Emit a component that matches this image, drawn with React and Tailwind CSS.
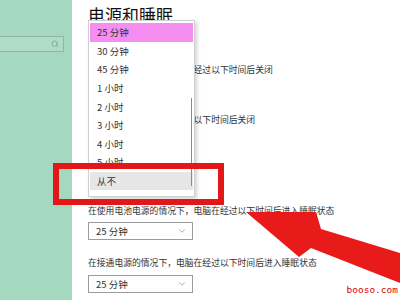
import { ChevronDown, Search } from "lucide-react";

const options = ["25 分钟", "30 分钟", "45 分钟", "1 小时", "2 小时", "3 小时", "4 小时", "5 小时", "从不"];

const cjk = "font-['Noto_Sans_CJK_SC','Noto_Sans',sans-serif]";

const Select = ({ value, className = "" }) => (
  <div
    className={`w-[105px] h-[18px] border border-[#9c9c9c] bg-white flex items-center justify-between pl-[7px] pr-[5px] text-[9.5px] text-[#333] ${className}`}
  >
    <span>{value}</span>
    <ChevronDown className="w-[10px] h-[10px] text-[#777]" strokeWidth={1.5} />
  </div>
);

const Label = ({ children, className = "" }) => (
  <p className={`text-[8.8px] leading-[12px] text-[#333] whitespace-nowrap ${className}`}>{children}</p>
);

export default function App() {
  return (
    <div className={`relative w-[400px] h-[300px] overflow-hidden flex bg-white ${cjk}`}>
      {/* ── Left: nav panel ── */}
      <div className="w-[72px] shrink-0 bg-[#a4d8bf] border-r border-[#b9cec3] pt-[36px]">
        <div className="w-[64px] h-[16px] bg-[#afdcc7] border border-[#8fb4a2] border-l-0 flex items-center justify-end pr-[4px]">
          <Search className="w-[8px] h-[8px] text-[#5b7f6d]" strokeWidth={1.5} />
        </div>
      </div>

      {/* ── Right: settings ── */}
      <div className="relative flex-1 flex flex-col pl-4">
        <h1 className="pt-[6px] text-[17px] leading-none text-[#111]">电源和睡眠</h1>

        <h2 className="mt-[15px] text-[13px] leading-[15px] text-[#111]">屏幕</h2>
        <Label className="mt-[11px]">在使用电池电源的情况下，经过以下时间后关闭</Label>
        <Select value="5 分钟" className="mt-[2px]" />
        <Label className="mt-[18px]">在接通电源的情况下，经过以下时间后关闭</Label>
        <Select value="10 分钟" className="mt-[2px]" />

        <h2 className="mt-[14px] text-[13px] leading-[15px] text-[#111]">睡眠</h2>
        <Label className="mt-[30px]">在使用电池电源的情况下，电脑在经过以下时间后进入睡眠状态</Label>
        <Select value="25 分钟" className="mt-[5px] h-[17px]" />
        <Label className="mt-[17px]">在接通电源的情况下，电脑在经过以下时间后进入睡眠状态</Label>
        <Select value="25 分钟" className="mt-[6px]" />

        {/* open dropdown */}
        <div className="absolute left-4 top-[20px] w-[107px] h-[177px] bg-white border border-[#cfcfcf] shadow-[2px_2px_4px_rgba(0,0,0,0.18)] pt-[2px] px-[1px]">
          {options.map((o, i) => (
            <div
              key={o}
              className={`h-[18.6px] flex items-center pl-[7px] text-[9.5px] text-[#333] ${
                i === 0 ? "bg-[#f48ef0]" : i === 8 ? "bg-[#e6e6e6]" : ""
              }`}
            >
              {o}
            </div>
          ))}
          <div className="absolute right-[2px] top-[77px] w-px h-[88px] bg-[#8a8a8a]" />
        </div>
      </div>

      {/* annotations */}
      <div className="absolute left-[53px] top-[163px] w-[171px] h-[42px] border-[6px] border-[#e31717]" />
      <svg className="absolute inset-0 pointer-events-none" width="400" height="300" viewBox="0 0 400 300">
        <polygon
          points="246,212 316,212 321,229 400,253 400,283 311,248 299,257"
          fill="#e81a1a"
        />
      </svg>
      <span className="absolute right-[2px] top-[284px] text-[9.5px] leading-[12px] text-[#e00000] font-['DejaVu_Sans_Mono',monospace]">
        booso.com
      </span>
    </div>
  );
}
